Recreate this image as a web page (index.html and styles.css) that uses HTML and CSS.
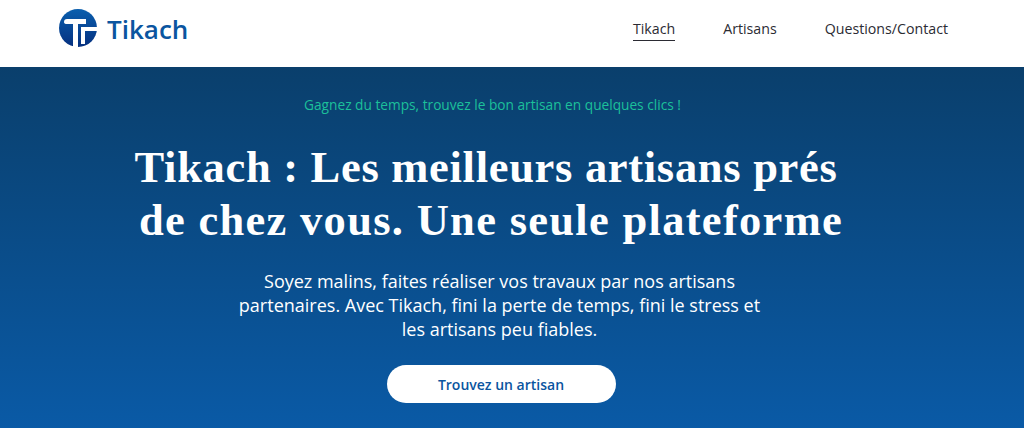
FILE: index.html
```html
<!DOCTYPE html>
<html lang="fr">
<head>
    <meta charset="UTF-8">
    <meta name="viewport" content="width=device-width, initial-scale=1.0">
    <title>Tikach</title>
    <link rel="stylesheet" href="styles.css">
</head>
<body>
    <header class="site-header">
        <a class="brand" href="#">
            <svg class="brand-logo" viewBox="0 0 38 38" width="38" height="38" aria-hidden="true">
                <defs>
                    <linearGradient id="logoFill" x1="0" y1="0" x2="0" y2="1">
                        <stop offset="0" stop-color="#0a5fae"/>
                        <stop offset="1" stop-color="#06307f"/>
                    </linearGradient>
                </defs>
                <circle cx="19" cy="19" r="19" fill="url(#logoFill)"/>
                <path d="M8 10H27V15H19V38H14V15H8Q5 15 5 13Q5 10 8 10Z" fill="#fff"/>
                <path d="M22 18H38V22H26V35H22Z" fill="#fff"/>
            </svg>
            <span class="brand-name">Tikach</span>
        </a>
        <nav class="main-nav">
            <a class="nav-link active" href="#">Tikach</a>
            <a class="nav-link" href="#">Artisans</a>
            <a class="nav-link" href="#">Questions/Contact</a>
        </nav>
    </header>

    <section class="hero">
        <p class="hero-tag">Gagnez du temps, trouvez le bon artisan en quelques clics !</p>
        <h1 class="hero-title">
            <span class="title-line">Tikach : Les meilleurs artisans prés</span>
            <span class="title-line second">de chez vous. Une seule plateforme</span>
        </h1>
        <p class="hero-text">Soyez malins, faites réaliser vos travaux par nos artisans partenaires. Avec Tikach, fini la perte de temps, fini le stress et les artisans peu fiables.</p>
        <a class="hero-btn" href="#">Trouvez un artisan</a>
    </section>
</body>
</html>
```

FILE: styles.css
```css
* {
    box-sizing: border-box;
}
body {
    margin: 0;
    height: 428px;
    overflow: hidden;
    font-family: "Open Sans", sans-serif;
    background-color: #fff;
}
a {
    text-decoration: none;
}
.site-header {
    height: 67px;
    display: flex;
    justify-content: space-between;
    align-items: flex-start;
    padding: 9px 76px 0 59px;
}
.brand {
    display: flex;
    align-items: center;
    gap: 10px;
}
.brand-name {
    margin-top: 2px;
    font-size: 26px;
    font-weight: 600;
    color: #0a55a0;
}
.main-nav {
    display: flex;
    gap: 48px;
    padding-top: 9px;
}
.nav-link {
    font-size: 14.2px;
    line-height: 21px;
    color: #2b2b33;
    padding-bottom: 1px;
    border-bottom: 1px solid transparent;
}
.nav-link.active {
    border-bottom-color: #2b2b33;
}
.hero {
    height: 361px;
    display: flex;
    flex-direction: column;
    align-items: center;
    padding-top: 28px;
    background: linear-gradient(180deg, #0a3f6c 0%, #0a5aa6 100%);
    color: #fff;
}
.hero-tag {
    margin: 0 0 0 -39px;
    font-size: 13.7px;
    line-height: 20px;
    color: #1cc09a;
}
.hero-title {
    width: 760px;
    margin: 26px 0 0 -52px;
    font-family: "Liberation Serif", serif;
    font-size: 44.5px;
    line-height: 53px;
    font-weight: 700;
    text-align: center;
}
.title-line {
    display: block;
    letter-spacing: 0.7px;
}
.title-line.second {
    padding-left: 10px;
    letter-spacing: 1.3px;
}
.hero-text {
    width: 540px;
    margin: 22px 0 0 -25px;
    font-size: 18px;
    line-height: 24px;
    text-align: center;
}
.hero-btn {
    width: 229px;
    height: 38px;
    margin: 24px 0 0 -22px;
    display: flex;
    align-items: center;
    justify-content: center;
    border-radius: 19px;
    background-color: #fff;
    color: #0a55a0;
    font-size: 14px;
    font-weight: 600;
}
```
